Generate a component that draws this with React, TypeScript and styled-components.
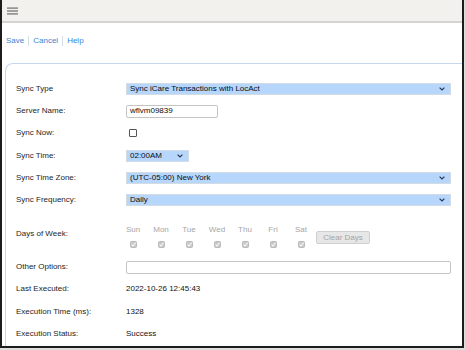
import React from "react";
import styled, { createGlobalStyle } from "styled-components";

const GlobalStyle = createGlobalStyle`
  html, body {
    margin: 0;
    padding: 0;
    background: #dedede;
    font-family: "Liberation Sans", Arial, sans-serif;
  }
`;

const Frame = styled.div`
  box-sizing: border-box;
  width: 464px;
  height: 348px;
  background: #fff;
  border-left: 2px solid #1c1c1c;
  border-right: 2px solid #1c1c1c;
  border-bottom: 2px solid #1c1c1c;
  overflow: hidden;
`;

const TopBar = styled.div`
  height: 21px;
  background: #f2f1ee;
  border-bottom: 2px solid #d5d4d0;
  display: flex;
  align-items: center;
  padding-left: 5px;
`;

const Links = styled.div`
  display: flex;
  align-items: center;
  margin: 13px 0 0 4px;
  height: 10px;
  font-size: 8px;
  line-height: 10px;
`;

const LinkItem = styled.a`
  color: #3a84d6;
  text-decoration: none;
  cursor: pointer;
`;

const Sep = styled.span`
  width: 1px;
  height: 10px;
  background: #d3dde9;
  margin: 0 4px;
`;

const Panel = styled.div`
  margin: 17px 0 0 3px;
  border-top: 1px solid #c7d8ee;
  border-left: 1px solid #c7d8ee;
  border-top-left-radius: 8px;
  padding: 14px 0 0 10px;
  height: 300px;
`;

const Form = styled.div`
  display: grid;
  grid-template-columns: 110px 325px;
  font-size: 8px;
`;

const Label = styled.div<{ $tall?: boolean }>`
  color: #1e1e1e;
  height: ${({ $tall }) => ($tall ? "45px" : "22.2px")};
  display: flex;
  align-items: ${({ $tall }) => ($tall ? "flex-start" : "center")};
  padding-top: ${({ $tall }) => ($tall ? "18px" : "0")};
  box-sizing: border-box;
  line-height: 10px;
`;

const Field = styled.div<{ $tall?: boolean }>`
  height: ${({ $tall }) => ($tall ? "45px" : "22.2px")};
  display: flex;
  align-items: center;
  color: #111;
  line-height: 10px;
`;

const Select = styled.div<{ $width?: number }>`
  box-sizing: border-box;
  width: ${({ $width }) => ($width ? `${$width}px` : "100%")};
  height: 12px;
  background: #b6d6fb;
  border: 1px solid #d3dbe4;
  display: flex;
  align-items: center;
  justify-content: space-between;
  padding: 0 5px 0 3px;
  color: #0c0c0c;
  font-size: 8px;
`;

const TextInput = styled.div<{ $width?: number }>`
  box-sizing: border-box;
  width: ${({ $width }) => ($width ? `${$width}px` : "100%")};
  height: 13px;
  border: 1px solid #c4c4c4;
  border-radius: 2px;
  background: #fff;
  padding-left: 3px;
  display: flex;
  align-items: center;
  color: #0c0c0c;
`;

const Box = styled.span`
  box-sizing: border-box;
  width: 8px;
  height: 8px;
  margin-left: 3px;
  border: 1px solid #555;
  border-radius: 1px;
  background: #fff;
`;

const DaysWrap = styled.div`
  display: flex;
  align-items: center;
  padding-top: 5px;
`;

const Days = styled.div`
  display: grid;
  grid-template-columns: repeat(7, 14px);
  column-gap: 14px;
`;

const Day = styled.div`
  display: flex;
  flex-direction: column;
  align-items: center;
  gap: 6px;
  color: #a6a6a6;
  white-space: nowrap;
`;

const ClearButton = styled.button`
  margin-left: 8px;
  margin-top: 3px;
  width: 54px;
  height: 13px;
  padding: 0;
  background: #e7e7e7;
  border: 1px solid #cfcfcf;
  border-radius: 2px;
  color: #a4a4a4;
  font-family: "Liberation Sans", Arial, sans-serif;
  font-size: 8px;
`;

const Menu = () => (
  <svg width="12" height="8" viewBox="0 0 12 8">
    <rect x="0" y="0.4" width="11" height="1.4" fill="#7f7f7f" />
    <rect x="0" y="3.3" width="11" height="1.4" fill="#7f7f7f" />
    <rect x="0" y="6.2" width="11" height="1.4" fill="#7f7f7f" />
  </svg>
);

const Chevron = () => (
  <svg width="6" height="4" viewBox="0 0 6 4">
    <path d="M0.6 0.6 L3 3 L5.4 0.6" fill="none" stroke="#2a3550" strokeWidth="1.2" />
  </svg>
);

const DisabledCheck = () => (
  <svg width="7" height="7" viewBox="0 0 7 7">
    <rect x="0.5" y="0.5" width="6" height="6" rx="1" fill="#c9c9c9" stroke="#b9b9b9" />
    <path d="M1.5 3.6 L2.9 5 L5.5 1.9" fill="none" stroke="#f7f7f7" strokeWidth="1.1" />
  </svg>
);

const days = ["Sun", "Mon", "Tue", "Wed", "Thu", "Fri", "Sat"];

export default function App() {
  return (
    <>
      <GlobalStyle />
      <Frame>
        <TopBar>
          <Menu />
        </TopBar>
        <Links>
          <LinkItem>Save</LinkItem>
          <Sep />
          <LinkItem>Cancel</LinkItem>
          <Sep />
          <LinkItem>Help</LinkItem>
        </Links>
        <Panel>
          <Form>
            <Label>Sync Type</Label>
            <Field>
              <Select>
                <span>Sync iCare Transactions with LocAct</span>
                <Chevron />
              </Select>
            </Field>

            <Label>Server Name:</Label>
            <Field>
              <TextInput $width={92}>wflvm09839</TextInput>
            </Field>

            <Label>Sync Now:</Label>
            <Field>
              <Box />
            </Field>

            <Label>Sync Time:</Label>
            <Field>
              <Select $width={63}>
                <span>02:00AM</span>
                <Chevron />
              </Select>
            </Field>

            <Label>Sync Time Zone:</Label>
            <Field>
              <Select>
                <span>(UTC-05:00) New York</span>
                <Chevron />
              </Select>
            </Field>

            <Label>Sync Frequency:</Label>
            <Field>
              <Select>
                <span>Daily</span>
                <Chevron />
              </Select>
            </Field>

            <Label $tall>Days of Week:</Label>
            <Field $tall>
              <DaysWrap>
                <Days>
                  {days.map((d) => (
                    <Day key={d}>
                      <span>{d}</span>
                      <DisabledCheck />
                    </Day>
                  ))}
                </Days>
                <ClearButton disabled>Clear Days</ClearButton>
              </DaysWrap>
            </Field>

            <Label>Other Options:</Label>
            <Field>
              <TextInput />
            </Field>

            <Label>Last Executed:</Label>
            <Field>2022-10-26 12:45:43</Field>

            <Label>Execution Time (ms):</Label>
            <Field>1328</Field>

            <Label>Execution Status:</Label>
            <Field>Success</Field>
          </Form>
        </Panel>
      </Frame>
    </>
  );
}
